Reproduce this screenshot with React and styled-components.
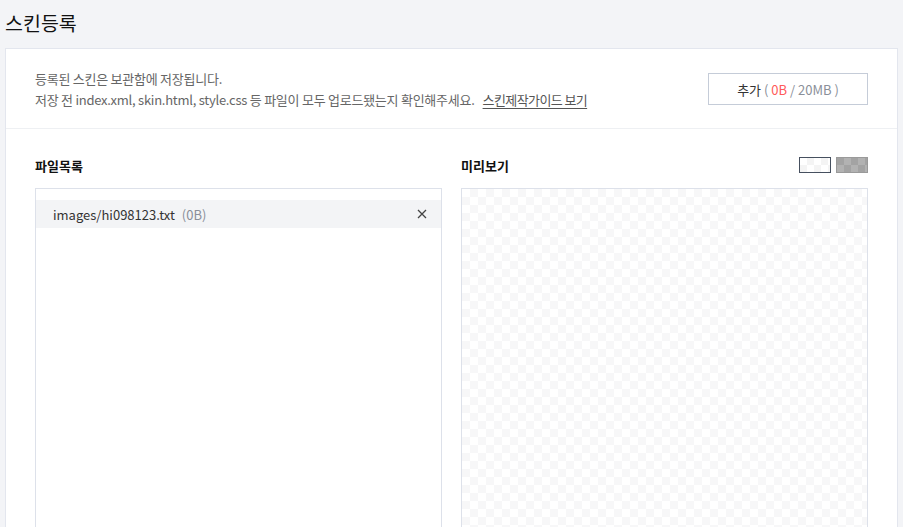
import React from 'react'
import styled, { createGlobalStyle } from 'styled-components'

const GlobalStyle = createGlobalStyle`
  html, body {
    margin: 0;
    padding: 0;
    background: #f3f4f7;
    font-family: "Noto Sans CJK KR", "Noto Sans", sans-serif;
    color: #222;
    overflow: hidden;
  }
`

const Page = styled.div`
  height: 527px;
  overflow: hidden;
`

const Title = styled.h1`
  margin: 0;
  height: 48px;
  padding-left: 5px;
  display: flex;
  align-items: center;
  font-size: 19.5px;
  font-weight: 400;
  color: #111;
  padding-bottom: 4px;
  box-sizing: border-box;
`

const Panel = styled.div`
  margin: 0 5px;
  background: #fff;
  border: 1px solid #e3e6ee;
  border-bottom: 0;
  min-height: 600px;
`

const Intro = styled.div`
  display: flex;
  justify-content: space-between;
  align-items: center;
  padding: 19px 29px 18px 29px;
  border-bottom: 1px solid #eef0f3;
`

const Notice = styled.p`
  margin: 0;
  font-size: 13px;
  line-height: 21px;
  color: #666;
  letter-spacing: -0.25px;
`

const GuideLink = styled.a`
  margin-left: 8px;
  color: #555;
  letter-spacing: -0.6px;
  text-decoration: underline;
  text-underline-offset: 3px;
  cursor: pointer;
`

const AddButton = styled.button`
  width: 160px;
  height: 32px;
  background: #fff;
  border: 1px solid #c5ccd8;
  font-family: inherit;
  font-size: 13px;
  color: #333;
  cursor: pointer;
`

const Muted = styled.span`
  color: #8a8f99;
`

const Used = styled.span`
  color: #ff5a5a;
`

const Body = styled.div`
  display: grid;
  grid-template-columns: 1fr 1fr;
  gap: 19px;
  padding: 25px 29px 0 29px;
`

const Column = styled.div`
  display: flex;
  flex-direction: column;
`

const ColumnHead = styled.div`
  display: flex;
  justify-content: space-between;
  align-items: center;
  height: 22px;
  margin-bottom: 12px;
`

const ColumnTitle = styled.h2`
  margin: 0;
  font-size: 13px;
  font-weight: 700;
  color: #111;
`

const Toggles = styled.div`
  display: flex;
  gap: 5px;
`

const Swatch = styled.button`
  width: 32px;
  height: 16px;
  padding: 0;
  box-sizing: border-box;
  cursor: pointer;
  border: 1px solid ${p => (p.$active ? '#46505f' : '#9a9a9a')};
  background-color: ${p => (p.$dark ? '#a3a3a3' : '#fff')};
  background-image: ${p =>
    p.$dark
      ? 'conic-gradient(#b2b2b2 25%, transparent 0 50%, #b2b2b2 0 75%, transparent 0)'
      : 'conic-gradient(#f4f4f4 25%, transparent 0 50%, #f4f4f4 0 75%, transparent 0)'};
  background-size: 14px 14px;
`

const FileBox = styled.ul`
  list-style: none;
  margin: 0;
  padding: 11px 0 0 0;
  height: 400px;
  border: 1px solid #dde1ea;
`

const FileRow = styled.li`
  display: flex;
  align-items: center;
  justify-content: space-between;
  height: 28px;
  padding: 0 14px 0 17px;
  background: #f3f4f6;
  font-size: 13px;
  color: #333;
`

const FileName = styled.span`
  display: flex;
  gap: 7px;
`

const RemoveButton = styled.button`
  border: 0;
  background: none;
  padding: 0;
  display: flex;
  cursor: pointer;
  color: #444;
`

const PreviewBox = styled.div`
  height: 400px;
  border: 1px solid #dde1ea;
  background-color: #fff;
  background-image: conic-gradient(#f7f7f8 25%, transparent 0 50%, #f7f7f8 0 75%, transparent 0);
  background-size: 16px 16px;
`

export default function App() {
  return (
    <Page>
      <GlobalStyle />
      <Title>스킨등록</Title>
      <Panel>
        <Intro>
          <Notice>
            등록된 스킨은 보관함에 저장됩니다.
            <br />
            저장 전 index.xml, skin.html, style.css 등 파일이 모두 업로드됐는지 확인해주세요.
            <GuideLink>스킨제작가이드 보기</GuideLink>
          </Notice>
          <AddButton>
            추가 <Muted>( </Muted><Used>0B</Used><Muted> / 20MB )</Muted>
          </AddButton>
        </Intro>
        <Body>
          <Column>
            <ColumnHead>
              <ColumnTitle>파일목록</ColumnTitle>
            </ColumnHead>
            <FileBox>
              <FileRow>
                <FileName>
                  images/hi098123.txt <Muted>(0B)</Muted>
                </FileName>
                <RemoveButton aria-label="삭제">
                  <svg width="10" height="10" viewBox="0 0 10 10">
                    <path d="M1 1L9 9M9 1L1 9" stroke="currentColor" strokeWidth="1.3" />
                  </svg>
                </RemoveButton>
              </FileRow>
            </FileBox>
          </Column>
          <Column>
            <ColumnHead>
              <ColumnTitle>미리보기</ColumnTitle>
              <Toggles>
                <Swatch $active aria-label="밝은 배경" />
                <Swatch $dark aria-label="어두운 배경" />
              </Toggles>
            </ColumnHead>
            <PreviewBox />
          </Column>
        </Body>
      </Panel>
    </Page>
  )
}
